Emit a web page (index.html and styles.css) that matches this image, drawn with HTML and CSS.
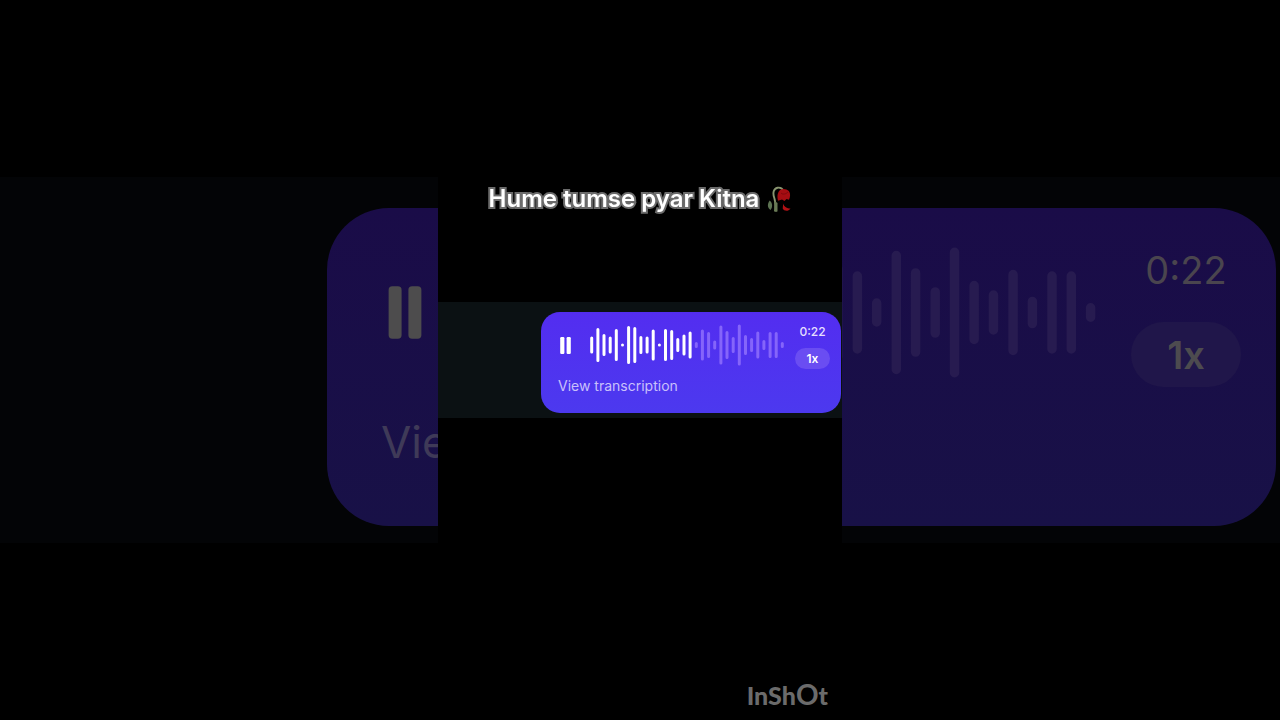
FILE: index.html
```html
<!DOCTYPE html>
<html lang="en">
  <head>
    <meta charset="utf-8">
    <title>Hume tumse pyar Kitna</title>
    <link rel="stylesheet" href="styles.css">
  </head>
  <body>
    <!-- shared shapes -->
    <svg class="shapes" width="0" height="0" aria-hidden="true">
      <symbol id="pause" viewBox="0 0 11 17">
        <rect x="0.2" y="0" width="4.2" height="17" rx="1.2" />
        <rect x="6.6" y="0" width="4.2" height="17" rx="1.2" />
      </symbol>
      <symbol id="wave" viewBox="0 0 194 42">
        <path class="played" d="M1.7 14v14M7.9 5.5v31M14 11.5v19M20.2 14v14M26.3 6.5v29M32.5 20.9v.2M38.6 3.5v35M44.8 4.5v33M50.9 13.5v15M57.1 14v14M63.2 7v28M69.4 20.9v.2M75.5 6.5v29M81.7 7.5v27M87.8 15.5v11M94 12v18M100.1 9v24" />
        <path class="rest" d="M106.3 19.5v3M112.4 7v28M118.6 9.5v23M124.7 18v6M130.9 3v36M137 8.5v25M143.2 14.5v13M149.3 2v38M155.5 12.5v17M161.6 15.5v11M167.8 9v24M173.9 17.5v7M180.1 9.5v23M186.2 9.5v23M192.3 19.5v3" />
      </symbol>
    </svg>

    <div class="stage">
      <!-- enlarged, dimmed copy behind the clip -->
      <div class="backdrop" aria-hidden="true" inert>
        <div class="band">
          <div class="voice">
            <div class="player">
              <button type="button" class="pause"><svg><use href="#pause" /></svg></button>
              <svg class="wave"><use href="#wave" /></svg>
              <div class="side">
                <span class="time">0:22</span>
                <button type="button" class="speed">1x</button>
              </div>
            </div>
            <a href="#" class="transcription">View transcription</a>
          </div>
        </div>
      </div>

      <main class="clip">
        <h1 class="title">
          <span>Hume tumse pyar Kitna</span>
          <svg class="rose" viewBox="0 0 24 26" role="img" aria-label="Wilted rose">
            <path d="M9 25.5C8.500 20 8.500 16 7.300 12C5.500 7 6.500 2.500 10.500 1.700C13.500 1.200 15.500 2.500 16.500 5" fill="none" stroke="#8a9670" stroke-width="1.9" />
            <path d="M2.700 14.500C5.500 17 6 20.500 3.500 24C0 21.500 .3 18 2.700 14.500z" fill="#5d7352" />
            <path d="M7.500 15l3 2v8.500H7z" fill="#697b55" />
            <path d="M11.500 6C13 2.200 19 2.200 21.800 5C23.700 7.500 23.300 11 22 13.700L19.500 13L17.500 15L15 13.500L11 14.700C10.200 11.500 10.200 8.500 11.500 6z" fill="#a50d12" />
            <path d="M14 7C16 9 19 8 21 6" fill="none" stroke="#7d090d" stroke-width="1" />
            <path d="M16.200 17.500C17 21 20 22.500 23.500 22.500C21 26 17 25 15.700 22.500z" fill="#b01115" />
          </svg>
        </h1>

        <div class="band">
          <div class="voice">
            <div class="player">
              <button type="button" class="pause" aria-label="Pause"><svg><use href="#pause" /></svg></button>
              <svg class="wave" role="img" aria-label="Voice message waveform"><use href="#wave" /></svg>
              <div class="side">
                <span class="time">0:22</span>
                <button type="button" class="speed">1x</button>
              </div>
            </div>
            <a href="#" class="transcription">View transcription</a>
          </div>
        </div>

        <div class="watermark">InSh<span class="big">O</span>t</div>
      </main>
    </div>
  </body>
</html>
```
FILE: styles.css
```css
body {
  margin: 0;
  background: #000;
  color: #fff;
  font-family: Inter, "Liberation Sans", sans-serif;
}

.shapes {
  position: absolute;
}

.stage {
  display: grid;
  grid-template-columns: minmax(0, 1fr);
  min-height: 100vh;
  overflow: hidden;
}

.backdrop,
.clip {
  grid-area: 1 / 1;
}

/* voice message */
.band {
  display: flex;
  justify-content: flex-end;
  padding: 10px 1px 5px 0;
  background: #0b1113;
}

.voice {
  box-sizing: border-box;
  width: 300px;
  padding: 12px 11px 17px 17px;
  border-radius: 19px;
  background: linear-gradient(#532df0, #4c39ef);
}

.player {
  display: flex;
  align-items: flex-start;
  margin-bottom: 7px;
}

button {
  padding: 0;
  border: 0;
  background: none;
  color: inherit;
  font-family: inherit;
  cursor: pointer;
}

.pause {
  display: flex;
  align-items: center;
  justify-content: center;
  width: 15px;
  height: 42px;
  margin-right: 17px;
}

.pause svg {
  width: 11px;
  height: 17px;
  fill: currentColor;
}

.wave {
  flex: 1;
  min-width: 0;
  height: 42px;
  margin-right: 11px;
  fill: none;
  stroke-width: 3px;
  stroke-linecap: round;
}

.played {
  stroke: var(--played, #fff);
}

.rest {
  stroke: var(--rest, #8565fa);
}

.side {
  display: flex;
  flex-direction: column;
  align-items: center;
  gap: 8px;
}

.time {
  color: #e6dfff;
  font-size: 12px;
  font-weight: 500;
  line-height: 16px;
}

.speed {
  width: 35px;
  height: 21px;
  border-radius: 11px;
  background: #6a4df2;
  font-size: 12px;
  font-weight: 600;
}

.transcription {
  display: block;
  color: #c9c0fb;
  font-size: 14px;
  line-height: 20px;
  text-decoration: none;
  white-space: nowrap;
}

/* backdrop sizes */
.backdrop {
  --played: #4b4a4c;
  --rest: #271b50;
  align-self: center;
}

.backdrop .band {
  padding: 31px 4px 17px 0;
  background: #030406;
}

.backdrop .voice {
  flex: none;
  width: 949px;
  padding: 38px 35px 52px 54px;
  border-radius: 62px;
  background: linear-gradient(#1a0c48, #181147);
}

.backdrop .player {
  margin-bottom: 23px;
}

.backdrop .pause {
  width: 48px;
  height: 133px;
  margin-right: 53px;
  color: #4d4c4d;
}

.backdrop .pause svg {
  width: 34px;
  height: 53px;
}

.backdrop .wave {
  height: 133px;
  margin-right: 35px;
}

.backdrop .side {
  gap: 28px;
}

.backdrop .time {
  color: #4a454e;
  font-size: 38px;
  font-weight: 400;
  line-height: 48px;
}

.backdrop .speed {
  width: 110px;
  height: 65px;
  border-radius: 33px;
  background: #20164a;
  color: #4d4b4f;
  font-size: 38px;
}

.backdrop .transcription {
  color: #3f3a58;
  font-size: 44px;
  line-height: 64px;
}

/* clip in the middle */
.clip {
  display: grid;
  position: relative;
  grid-template-rows: 1fr auto 1fr;
  justify-self: center;
  width: 100%;
  max-width: 404px;
  background: #000;
}

.title {
  display: flex;
  align-items: center;
  align-self: end;
  justify-content: center;
  gap: 8px;
  margin: 0 0 87px;
  font-size: 24px;
  font-weight: 600;
  line-height: 32px;
  -webkit-text-stroke: 4px #6b6b6b;
  paint-order: stroke fill;
  will-change: opacity;
}

.rose {
  width: 24px;
  height: 26px;
  -webkit-text-stroke: 0;
}

.watermark {
  align-self: end;
  padding: 0 14px 9px;
  color: #6b6b6b;
  font-family: Lato, sans-serif;
  font-size: 25px;
  font-weight: 900;
  line-height: 32px;
  text-align: right;
}

.watermark .big {
  font-size: 28px;
  font-weight: 700;
}
```
